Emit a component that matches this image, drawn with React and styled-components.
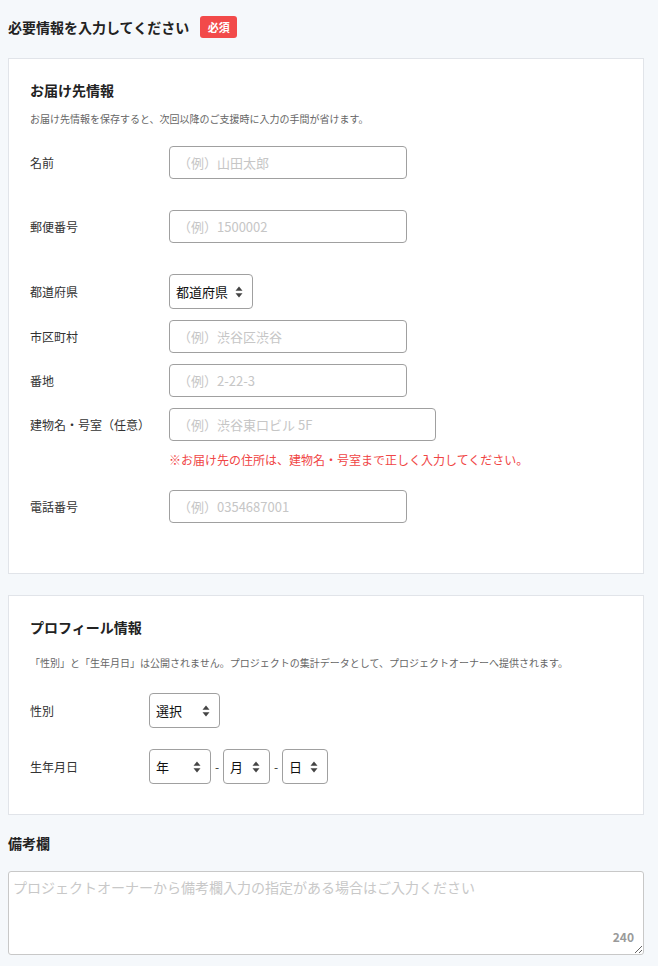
import React from "react";
import styled, { createGlobalStyle } from "styled-components";

const GlobalStyle = createGlobalStyle`
  * {
    box-sizing: border-box;
  }
  body {
    margin: 0;
    background: #f5f8fb;
    font-family: "Noto Sans CJK JP", "Noto Sans", sans-serif;
    color: #222;
  }
`;

function ArrowIcon() {
  return (
    <Arrow width="8" height="12" viewBox="0 0 8 12">
      <path d="M4 0.5 L7.5 4.8 L0.5 4.8 Z" fill="#444" />
      <path d="M4 11.5 L7.5 7.2 L0.5 7.2 Z" fill="#444" />
    </Arrow>
  );
}

function SelectBox({ width, value }) {
  return (
    <SelectWrap $width={width}>
      <Select defaultValue={value}>
        <option value={value}>{value}</option>
      </Select>
      <ArrowIcon />
    </SelectWrap>
  );
}

const fields = [
  { label: "名前", placeholder: "（例）山田太郎", gap: 31 },
  { label: "郵便番号", placeholder: "（例）1500002", gap: 31 },
];

const address = [
  { label: "市区町村", placeholder: "（例）渋谷区渋谷", gap: 11 },
  { label: "番地", placeholder: "（例）2-22-3", gap: 11 },
];

function App() {
  return (
    <Page>
      <GlobalStyle />
      <TitleRow>
        <Title>必要情報を入力してください</Title>
        <Badge>必須</Badge>
      </TitleRow>

      <Card $pb={50}>
        <CardTitle>お届け先情報</CardTitle>
        <Note $mt={12}>
          お届け先情報を保存すると、次回以降のご支援時に入力の手間が省けます。
        </Note>
        <Rows $mt={20}>
          {fields.map((f) => (
            <Row key={f.label} $gap={f.gap}>
              <Label $width={139}>{f.label}</Label>
              <Field>
                <Input placeholder={f.placeholder} />
              </Field>
            </Row>
          ))}
          <Row $gap={11}>
            <Label $width={139} $h={35}>
              都道府県
            </Label>
            <Field>
              <SelectBox width={84} value="都道府県" />
            </Field>
          </Row>
          {address.map((f) => (
            <Row key={f.label} $gap={f.gap}>
              <Label $width={139}>{f.label}</Label>
              <Field>
                <Input placeholder={f.placeholder} />
              </Field>
            </Row>
          ))}
          <Row $gap={21}>
            <Label $width={139}>建物名・号室（任意）</Label>
            <Field>
              <Input $width={267} placeholder="（例）渋谷東口ビル 5F" />
              <Warning>
                ※お届け先の住所は、建物名・号室まで正しく入力してください。
              </Warning>
            </Field>
          </Row>
          <Row $gap={0}>
            <Label $width={139}>電話番号</Label>
            <Field>
              <Input placeholder="（例）0354687001" />
            </Field>
          </Row>
        </Rows>
      </Card>

      <Card $mt={21} $pb={29}>
        <CardTitle>プロフィール情報</CardTitle>
        <Note $mt={19}>
          「性別」と「生年月日」は公開されません。プロジェクトの集計データとして、プロジェクトオーナーへ提供されます。
        </Note>
        <Rows $mt={23}>
          <Row $gap={21}>
            <Label $width={119} $h={35}>
              性別
            </Label>
            <Field>
              <SelectBox width={71} value="選択" />
            </Field>
          </Row>
          <Row $gap={0}>
            <Label $width={119} $h={36}>
              生年月日
            </Label>
            <DateGroup>
              <SelectBox width={62} value="年" />
              <Dash>-</Dash>
              <SelectBox width={47} value="月" />
              <Dash>-</Dash>
              <SelectBox width={46} value="日" />
            </DateGroup>
          </Row>
        </Rows>
      </Card>

      <SectionTitle>備考欄</SectionTitle>
      <TextAreaWrap>
        <TextArea placeholder="プロジェクトオーナーから備考欄入力の指定がある場合はご入力ください" />
        <Counter>240</Counter>
      </TextAreaWrap>
    </Page>
  );
}

export default App;

const Page = styled.div`
  padding: 16px 14px 10px 8px;
`;

const TitleRow = styled.div`
  display: flex;
  align-items: center;
  height: 22px;
`;

const Title = styled.h2`
  margin: 0;
  font-size: 14px;
  line-height: 20px;
  font-weight: 700;
  color: #222;
`;

const Badge = styled.span`
  margin-left: 11px;
  width: 37px;
  height: 22px;
  display: inline-flex;
  align-items: center;
  justify-content: center;
  background: #f24a4a;
  color: #fff;
  font-size: 11px;
  font-weight: 700;
  border-radius: 3px;
`;

const Card = styled.section`
  margin-top: ${(p) => p.$mt || 20}px;
  background: #fff;
  border: 1px solid #e1e4e9;
  padding: 21px 20px ${(p) => p.$pb}px 21px;
`;

const CardTitle = styled.h3`
  margin: 0;
  font-size: 14px;
  line-height: 20px;
  font-weight: 700;
  color: #222;
`;

const Note = styled.p`
  margin: ${(p) => p.$mt}px 0 0;
  font-size: 10px;
  line-height: 14px;
  color: #666;
`;

const Rows = styled.div`
  margin-top: ${(p) => p.$mt}px;
  display: flex;
  flex-direction: column;
`;

const Row = styled.div`
  display: flex;
  align-items: flex-start;
  margin-bottom: ${(p) => p.$gap}px;
`;

const Label = styled.div`
  width: ${(p) => p.$width}px;
  flex-shrink: 0;
  font-size: 12px;
  line-height: ${(p) => p.$h || 33}px;
  color: #333;
  white-space: nowrap;
`;

const Field = styled.div`
  display: flex;
  flex-direction: column;
  align-items: flex-start;
`;

const Input = styled.input`
  width: ${(p) => p.$width || 238}px;
  height: 33px;
  border: 1px solid #a0a0a0;
  border-radius: 4px;
  padding: 0 8px;
  font-family: "Noto Sans CJK JP", "Noto Sans", sans-serif;
  font-size: 13px;
  color: #222;
  background: #fff;
  outline: none;
  &::placeholder {
    color: #c6c6c6;
  }
`;

const Warning = styled.p`
  margin: 10px 0 0;
  font-size: 12px;
  line-height: 18px;
  color: #f04545;
  white-space: nowrap;
`;

const SelectWrap = styled.span`
  position: relative;
  display: inline-flex;
  width: ${(p) => p.$width}px;
  height: 35px;
`;

const Select = styled.select`
  appearance: none;
  width: 100%;
  height: 100%;
  border: 1px solid #a0a0a0;
  border-radius: 4px;
  background: #fff;
  padding: 0 20px 0 6px;
  font-family: "Noto Sans CJK JP", "Noto Sans", sans-serif;
  font-size: 13px;
  color: #111;
  outline: none;
`;

const Arrow = styled.svg`
  position: absolute;
  right: 10px;
  top: 50%;
  transform: translateY(-50%);
  pointer-events: none;
`;

const DateGroup = styled.div`
  display: flex;
  align-items: center;
`;

const Dash = styled.span`
  width: 12px;
  text-align: center;
  font-size: 12px;
  color: #333;
`;

const SectionTitle = styled.h3`
  margin: 18px 0 0;
  font-size: 14px;
  line-height: 20px;
  font-weight: 700;
  color: #222;
`;

const TextAreaWrap = styled.div`
  position: relative;
  margin-top: 18px;
`;

const TextArea = styled.textarea`
  display: block;
  width: 100%;
  height: 84px;
  border: 1px solid #c8c8c8;
  border-radius: 3px;
  padding: 5px 4px;
  font-family: "Noto Sans CJK JP", "Noto Sans", sans-serif;
  font-size: 14px;
  line-height: 20px;
  color: #222;
  background: #fff;
  resize: vertical;
  outline: none;
  &::placeholder {
    color: #c8c8c8;
  }
`;

const Counter = styled.span`
  position: absolute;
  right: 10px;
  bottom: 10px;
  font-size: 12px;
  font-weight: 700;
  color: #9a9a9a;
  pointer-events: none;
`;
